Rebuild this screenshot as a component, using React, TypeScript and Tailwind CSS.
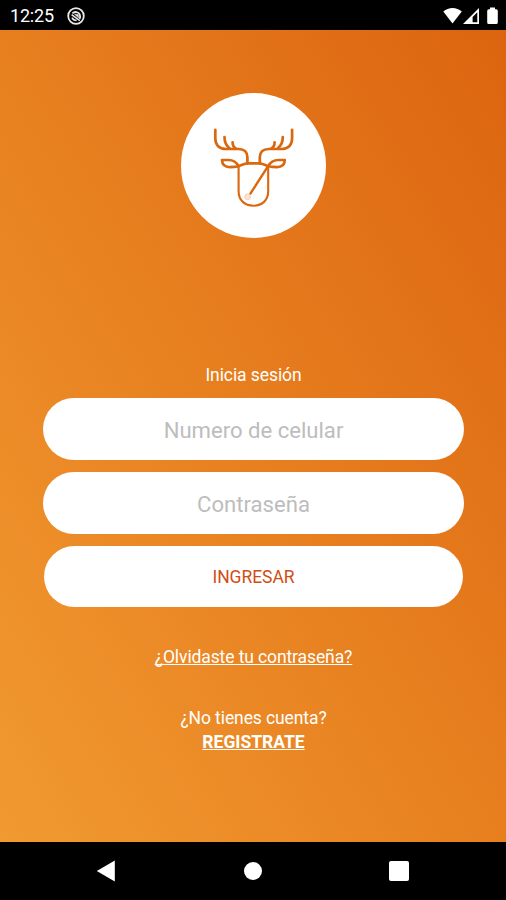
import React from 'react';

const fields = [
  { id: 'phone', type: 'tel', placeholder: 'Numero de celular' },
  { id: 'password', type: 'password', placeholder: 'Contraseña' },
];

const StatusBar: React.FC = () => (
  <header className="flex h-[29.5px] shrink-0 items-center justify-between bg-black pl-[10px] pr-[7px] pt-[2px] text-white">
    <div className="flex items-center gap-[13px]">
      <span className="text-[18px] leading-none tracking-[-0.2px]">12:25</span>
      <svg width="18" height="18" viewBox="0 0 18 18" fill="none" stroke="#e8e8e8">
        <circle cx="9" cy="9" r="7.8" strokeWidth="1.8" />
        <path d="M5.4 6.4C7.5 4.2 11.5 4.6 12.7 7.4C13.4 9.2 13.2 10.6 12.6 11.8" strokeWidth="1.8" />
        <path d="M4.6 7.6L12.8 13.6M5 10.6C5.8 12.4 7.4 13.4 9.6 13.4" strokeWidth="1.5" />
        <path d="M7.5 7.2L11.2 7.6L11.6 10.8Z" fill="#e8e8e8" strokeWidth="0.6" />
      </svg>
    </div>
    <svg width="56" height="18" viewBox="443 6 56 18" fill="#fff">
      <path d="M443.3 10.6C448.5 5.9 456.5 5.9 461.8 10.6L452.5 22.6Z" />
      <path fillRule="evenodd" d="M479 7V23H463ZM477.3 11.3V21.2H472.6V16Z" />
      <path d="M490 6.5h5v1.8h1.2q1.6 0 1.6 1.6v11.6q0 1.5-1.5 1.5h-7.6q-1.5 0-1.5-1.5v-11.6q0-1.6 1.6-1.6h1.2Z" />
    </svg>
  </header>
);

const DeerLogo: React.FC = () => (
  <div className="size-[145.5px] shrink-0 rounded-full bg-white">
    <svg
      viewBox="181.2 92.7 145.5 145.5"
      className="size-full"
      fill="none"
      stroke="#d9680f"
      strokeWidth="2.7"
      strokeLinecap="round"
      strokeLinejoin="round"
    >
      {/* Antlers */}
      <path d="M215.5 129.5V138C215.5 145 219.5 148.7 226 148.7H239C244.5 148.7 247.6 152 247.6 157V163" />
      <path d="M224.7 136.7C224.7 141.5 226.2 145.5 230 148.2M232.8 142C232.8 145 234 147.3 236.3 148.4" />
      <path d="M292.3 129.5V138C292.3 145 288.3 148.7 281.8 148.7H268.8C263.2 148.7 260 152 260 157V163" />
      <path d="M283 136.7C283 141.5 281.5 145.5 277.7 148.2M274.8 142C274.8 145 273.6 147.3 271.3 148.4" />
      {/* Ears */}
      <path d="M238.6 165.8C236.5 161.5 233 159.7 228.5 159.7H222.2C222.4 164 225 166.8 230 166.8C233.5 166.8 236 166.5 238.6 165.8Z" />
      <path d="M268.6 165.8C270.7 161.5 274.2 159.7 278.7 159.7H285C284.8 164 282.2 166.8 277.2 166.8C273.7 166.8 271.2 166.5 268.6 165.8Z" />
      {/* Head */}
      <path d="M238.6 165.8C242 164.8 244.5 163.1 248.3 163.1H259C262.7 163.1 265.2 164.8 268.6 165.8" />
      <path d="M238.8 166V191C238.8 200 245 205.4 253.6 205.4C262.2 205.4 268.4 200 268.4 191V166" strokeWidth="2.1" />
      <path d="M267.8 166.5L250.6 193.3" strokeWidth="2.4" />
      <circle cx="247.8" cy="196.5" r="2.9" fill="#fae3d5" stroke="#f6d0b8" strokeWidth="1" />
    </svg>
  </div>
);

const NavBar: React.FC = () => (
  <nav className="flex h-[58px] shrink-0 items-center justify-between bg-black pl-[96px] pr-[97px] text-white">
    <svg width="20" height="22" viewBox="0 0 20 22" fill="currentColor">
      <path d="M18.8 0.5V21.5L0.8 11Z" />
    </svg>
    <span className="ml-px size-[18.5px] rounded-full bg-white" />
    <span className="size-[20px] rounded-[2px] bg-white" />
  </nav>
);

const App: React.FC = () => {
  return (
    <div className="flex h-[900px] w-[506px] flex-col overflow-hidden bg-black font-['Roboto',sans-serif]">
      <StatusBar />

      <main className="flex flex-1 flex-col items-center bg-[linear-gradient(to_bottom_left,#dc6410_0%,#e77f1f_50%,#f19a31_100%)] pl-px pt-[63px] text-white">
        <DeerLogo />

        <form className="mt-[126px] flex w-[421px] flex-col items-center">
          <h1 className="h-[34px] text-[17.5px] leading-[22px] tracking-[-0.08px]">Inicia sesión</h1>
          {fields.map((field) => (
            <input
              key={field.id}
              type={field.type}
              placeholder={field.placeholder}
              className="mb-[12px] h-[62px] w-full rounded-full bg-white pt-[2px] text-center text-[22.1px] text-gray-700 placeholder:text-[#bdbdbd]"
            />
          ))}
          <button
            type="button"
            className="h-[60.5px] w-[419px] rounded-full bg-white pt-[2px] text-[17.5px] tracking-[-0.05px] text-[#cf4e14]"
          >
            INGRESAR
          </button>
        </form>

        <a
          href="#recuperar"
          className="mt-[38.5px] text-[17.5px] leading-[24px] tracking-[-0.11px] underline [text-decoration-skip-ink:none]"
        >
          ¿Olvidaste tu contraseña?
        </a>
        <p className="mt-[37px] text-[17.5px] leading-[24px] tracking-[-0.1px]">¿No tienes cuenta?</p>
        <a
          href="#registro"
          className="text-[17.5px] font-bold leading-[24px] underline [text-decoration-skip-ink:none]"
        >
          REGISTRATE
        </a>
      </main>

      <NavBar />
    </div>
  );
};

export default App;
